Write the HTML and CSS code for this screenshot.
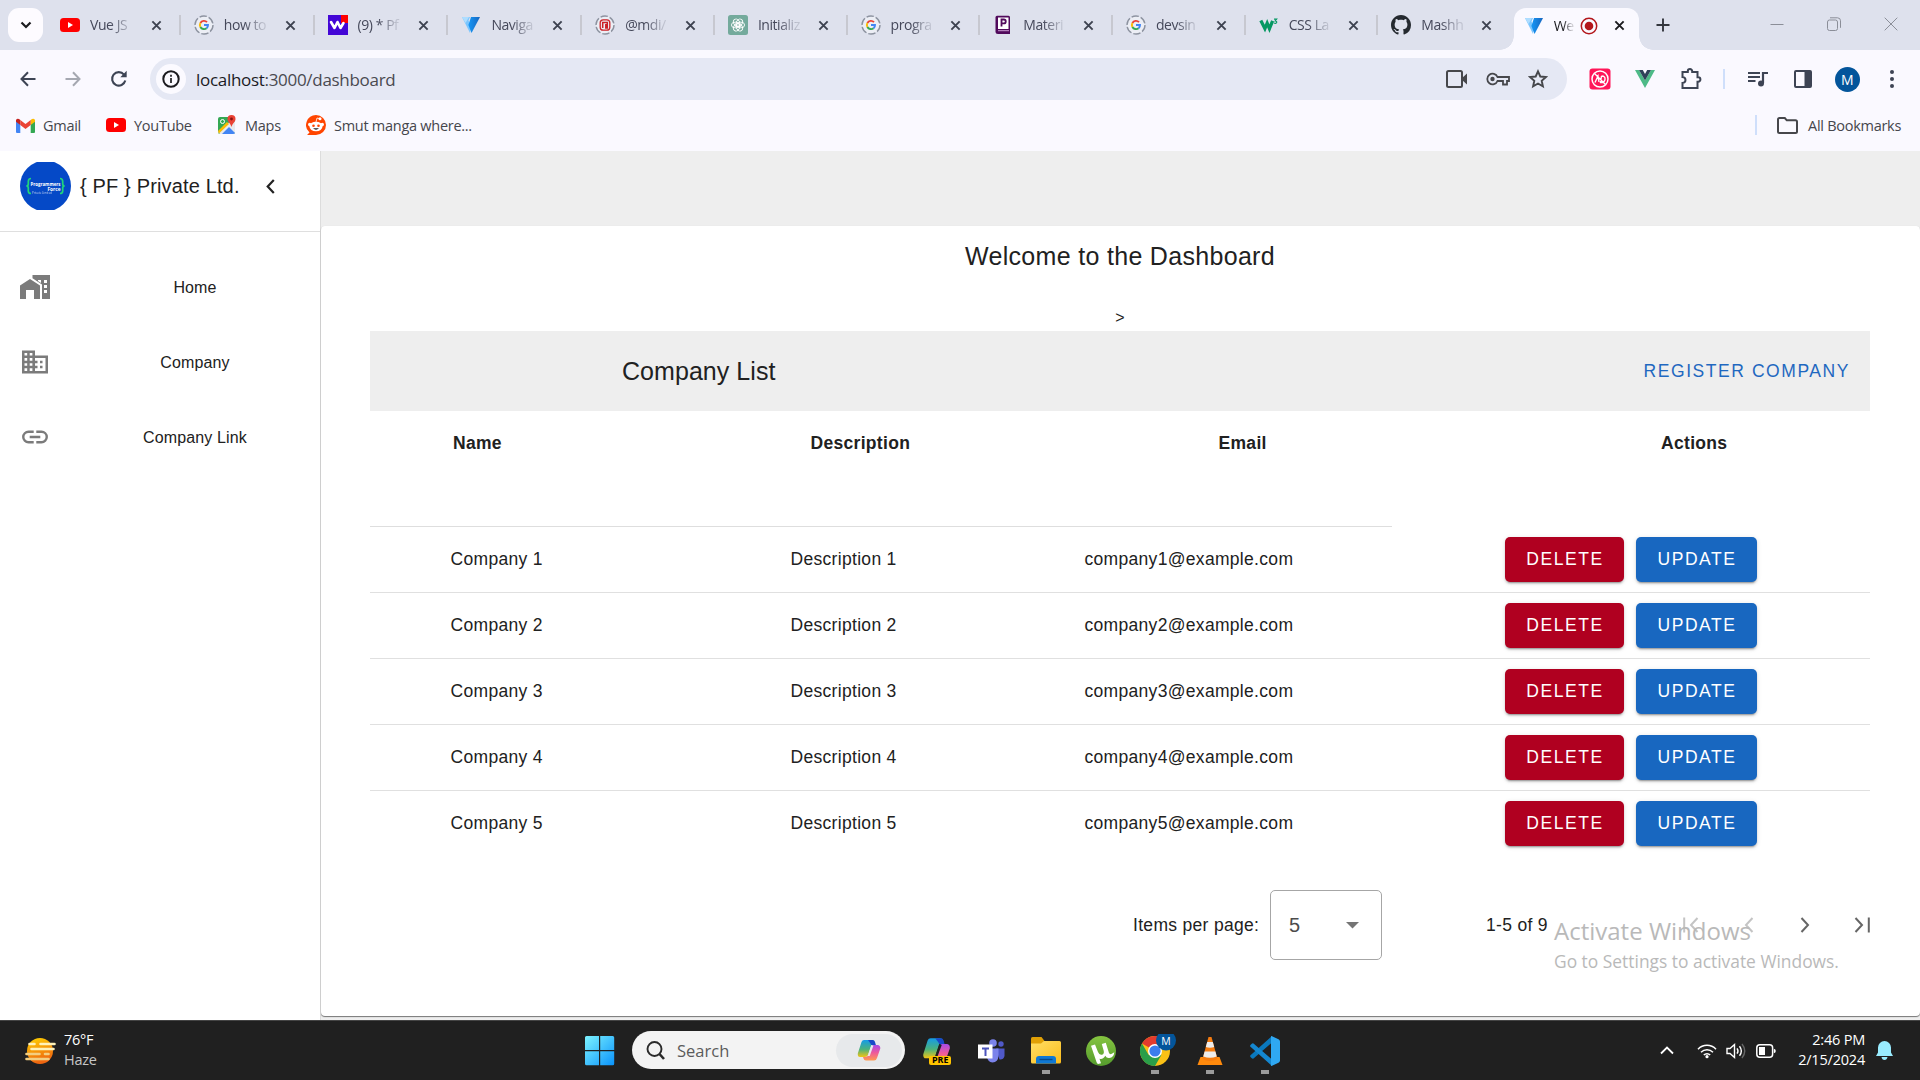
FILE: index.html
```html
<!DOCTYPE html>
<html lang="en">
<head>
<meta charset="utf-8">
<title>Welcome to the Dashboard</title>
<link rel="stylesheet" href="styles.css">
</head>
<body>
<svg class="defs" width="0" height="0">
  <defs>
    <linearGradient id="gv" x1="0" y1="0" x2="1" y2="0"><stop offset="0" stop-color="#1697f6"/><stop offset="1" stop-color="#1867c0"/></linearGradient>
    <linearGradient id="gwin" x1="0" y1="0" x2="1" y2="1"><stop offset="0" stop-color="#7df3ff"/><stop offset="1" stop-color="#0a93fb"/></linearGradient>
    <linearGradient id="gsun" x1="0" y1="0" x2="0.3" y2="1"><stop offset="0" stop-color="#ffd400"/><stop offset="1" stop-color="#ee6510"/></linearGradient>
    <linearGradient id="gcl" x1="0" y1="0" x2="0" y2="1"><stop offset="0" stop-color="#149be8"/><stop offset=".55" stop-color="#4ab27c"/><stop offset="1" stop-color="#f3c514"/></linearGradient>
    <linearGradient id="gcr" x1="0" y1="0" x2="0" y2="1"><stop offset="0" stop-color="#a74be8"/><stop offset=".5" stop-color="#ee5a9a"/><stop offset="1" stop-color="#ff9a50"/></linearGradient>
    <linearGradient id="gfold" x1="0" y1="0" x2="1" y2="1"><stop offset="0" stop-color="#ffdf66"/><stop offset="1" stop-color="#fbbc1c"/></linearGradient>
    <linearGradient id="gut" x1="0" y1="0" x2="0" y2="1"><stop offset="0" stop-color="#85c440"/><stop offset="1" stop-color="#559c2d"/></linearGradient>
    <symbol id="x" viewBox="0 0 12 12"><path d="M1.5 1.5l9 9M10.500 1.500l-9 9" fill="none" stroke="currentColor" stroke-width="2.100"/></symbol>
    <symbol id="yt" viewBox="0 0 20 20"><rect y="3" width="20" height="14" rx="3.500" fill="#f00"/><path d="M8 7v6l5-3z" fill="#fff"/></symbol>
    <symbol id="g" viewBox="0 0 20 20"><circle cx="10" cy="10" r="9" fill="#eceef5" stroke="#8d93a0" stroke-width="1.400" stroke-dasharray="7.400 2"/><g fill="none" stroke-width="1.900"><path d="M13 7.200A4.100 4.100 0 0 0 6.400 8" stroke="#ea4335"/><path d="M6.400 8a4.100 4.100 0 0 0 0 4" stroke="#fbbc05"/><path d="M6.400 12a4.100 4.100 0 0 0 6.200 1.200" stroke="#34a853"/><path d="M12.600 13.200A4 4 0 0 0 14 10h-4" stroke="#4285f4"/></g></symbol>
    <symbol id="w" viewBox="0 0 20 20"><path fill="#4306d6" d="M0 0h20v20H0z"/><path fill="#f00" d="M13 0h7v8h-7z"/><path d="M3 7l3.500 6L9.500 7l3 6L15.500 8" fill="none" stroke="#fff" stroke-width="2.600" stroke-linecap="round" stroke-linejoin="round"/></symbol>
    <symbol id="vt" viewBox="0 0 20 18"><path d="M1 1h8l-1.500 3.500 2.500 6L9 17z" fill="#7bc6ff"/><path d="M1 1h7L4.500 7z" fill="#aeddff"/><path d="M10 1h9L10.500 17 7.400 9z" fill="url(#gv)"/></symbol>
    <symbol id="mdi" viewBox="0 0 20 20"><circle cx="10" cy="10" r="9" fill="#eceef5" stroke="#8d93a0" stroke-width="1.400" stroke-dasharray="7.400 2"/><rect x="5.200" y="4.800" width="9.600" height="10.400" rx="3" fill="none" stroke="#cb2027" stroke-width="1.300"/><path d="M7.700 13V7.500h4.600V13h-1.500V9" fill="none" stroke="#cb2027" stroke-width="1.500"/></symbol>
    <symbol id="ai" viewBox="0 0 20 20"><rect width="20" height="20" rx="2.500" fill="#74aa9c"/><g fill="none" stroke="#fff" stroke-width=".9"><ellipse cx="10" cy="7.400" rx="2.900" ry="4" transform="rotate(30 10 10)"/><ellipse cx="10" cy="7.400" rx="2.900" ry="4" transform="rotate(90 10 10)"/><ellipse cx="10" cy="7.400" rx="2.900" ry="4" transform="rotate(150 10 10)"/><ellipse cx="10" cy="7.400" rx="2.900" ry="4" transform="rotate(210 10 10)"/><ellipse cx="10" cy="7.400" rx="2.900" ry="4" transform="rotate(270 10 10)"/><ellipse cx="10" cy="7.400" rx="2.900" ry="4" transform="rotate(330 10 10)"/></g></symbol>
    <symbol id="p" viewBox="0 0 20 20"><path d="M4 .8h11.500q1.500 0 1.500 1.500V19H5q-2.500 0-2.500-2.500v-14Q2.500.8 4 .8z" fill="#510a5c"/><path d="M5 2.500h10.500V14H5z" fill="#fff"/><path d="M5 15.700h11" stroke="#c99bd0"/><path d="M8.500 11.500v-7h2.300a1.900 1.900 0 0 1 0 3.900H8.500" fill="none" stroke="#510a5c" stroke-width="1.800"/></symbol>
    <symbol id="w3" viewBox="0 0 22 20"><path d="M2 5l4.500 9L9 8l2.500 6L15 5.500" fill="none" stroke="#059862" stroke-width="3.600"/><path d="M16.500 3.500h3l-1.700 2q2 0 1.700 1.600t-3 .8" fill="none" stroke="#059862" stroke-width="1.200"/></symbol>
    <symbol id="gh" viewBox="0 0 16 16"><path fill="#24292f" d="M8 0C3.580 0 0 3.580 0 8c0 3.540 2.290 6.530 5.470 7.590.4.070.55-.17.55-.38 0-.19-.01-.82-.01-1.490-2.010.37-2.530-.49-2.690-.94-.09-.23-.48-.94-.82-1.130-.28-.15-.68-.52-.01-.53.63-.01 1.080.58 1.230.82.72 1.210 1.870.87 2.330.66.070-.52.280-.87.510-1.070-1.780-.2-3.640-.89-3.640-3.950 0-.87.310-1.590.82-2.150-.08-.2-.36-1.020.08-2.120 0 0 .67-.21 2.200.82.640-.18 1.320-.27 2-.27s1.360.09 2 .27c1.530-1.040 2.200-.82 2.200-.82.440 1.100.160 1.920.080 2.120.510.560.820 1.270.820 2.150 0 3.070-1.870 3.750-3.650 3.950.290.250.540.730.540 1.480 0 1.070-.010 1.930-.010 2.200 0 .210.150.460.550.380A8.010 8.010 0 0 0 16 8c0-4.420-3.580-8-8-8z"/></symbol>
    <symbol id="cop" viewBox="0 0 24 22"><path d="M7 1h8q2 0 2.500 2l.8 3h-4L11 16q-.7 2-3 2H3Q.5 18 .8 14.500L4.500 3Q5.200 1 7 1z" fill="url(#gcl)"/><path d="M11 1h4.500q2 0 2.500 2l1 3.500h-3q-2 0-2.500-2z" fill="#1849c8"/><path d="M16 6h5q2.500.5 2.300 3.500L20 19q-.7 2.500-3 2.500H9q-2 0-2.500-2L6 18h2.500q2 0 2.700-2z" fill="url(#gcr)"/><path d="M14.300 6.500h2.200l-3.800 10.500h-2z" fill="var(--cut,#e8eaed)"/></symbol>
  </defs>
</svg>

<header class="browser">
  <div class="tabstrip">
    <div class="tabsearch"><svg width="12" height="8" viewBox="0 0 12 8"><path d="M1.500 1.500L6 6l4.500-4.500" fill="none" stroke="#1b1b1f" stroke-width="2.200"/></svg></div>
    <div class="tab wide"><svg class="fav"><use href="#yt"/></svg><span>Vue JS</span><svg class="x"><use href="#x"/></svg></div>
    <div class="tab wide"><svg class="fav"><use href="#g"/></svg><span>how to</span><svg class="x"><use href="#x"/></svg></div>
    <div class="tab wide"><svg class="fav"><use href="#w"/></svg><span>(9) * Pf</span><svg class="x"><use href="#x"/></svg></div>
    <div class="tab wide"><svg class="fav"><use href="#vt"/></svg><span>Naviga</span><svg class="x"><use href="#x"/></svg></div>
    <div class="tab"><svg class="fav"><use href="#mdi"/></svg><span>@mdi/</span><svg class="x"><use href="#x"/></svg></div>
    <div class="tab"><svg class="fav"><use href="#ai"/></svg><span>Initializ</span><svg class="x"><use href="#x"/></svg></div>
    <div class="tab"><svg class="fav"><use href="#g"/></svg><span>progra</span><svg class="x"><use href="#x"/></svg></div>
    <div class="tab"><svg class="fav"><use href="#p"/></svg><span>Materi</span><svg class="x"><use href="#x"/></svg></div>
    <div class="tab"><svg class="fav"><use href="#g"/></svg><span>devsin</span><svg class="x"><use href="#x"/></svg></div>
    <div class="tab"><svg class="fav"><use href="#w3"/></svg><span>CSS La</span><svg class="x"><use href="#x"/></svg></div>
    <div class="tab last"><svg class="fav"><use href="#gh"/></svg><span>Mashh</span><svg class="x"><use href="#x"/></svg></div>
    <div class="tab active"><svg class="fav"><use href="#vt"/></svg><span>We</span><svg class="rec" viewBox="0 0 18 18"><circle cx="9" cy="9" r="7.700" fill="none" stroke="#b3161b" stroke-width="1.500"/><circle cx="9" cy="9" r="4.300" fill="#b3161b"/></svg><svg class="x"><use href="#x"/></svg></div>
    <svg class="newtab" width="14" height="14" viewBox="0 0 14 14"><path d="M7 .5v13M.5 7h13" stroke="#33363d" stroke-width="1.900"/></svg>
    <div class="winctl">
      <svg width="14" height="14" viewBox="0 0 14 14"><path d="M.5 7.500h13" stroke="#8b8e98"/></svg>
      <svg width="14" height="14" viewBox="0 0 14 14" fill="none" stroke="#8b8e98"><rect x=".5" y="3" width="10" height="10.500" rx="2"/><path d="M3 .8h7.500q3 0 3 3v7"/></svg>
      <svg width="14" height="14" viewBox="0 0 14 14"><path d="M.7.7l12.600 12.600M13.300.7L.7 13.300" stroke="#8b8e98"/></svg>
    </div>
  </div>

  <div class="toolbar">
    <div class="nav">
      <svg width="16" height="16" viewBox="0 0 16 16" fill="none" stroke="#3d4454" stroke-width="2"><path d="M15.500 8H1.500M8 1.300L1.500 8 8 14.700"/></svg>
      <svg width="16" height="16" viewBox="0 0 16 16" fill="none" stroke="#a5a8b1" stroke-width="2"><path d="M.5 8h14M8 1.300L14.500 8 8 14.700"/></svg>
      <svg width="18" height="18" viewBox="0 0 18 18"><path d="M15.300 10.500A6.700 6.700 0 1 1 14 4.600" fill="none" stroke="#3d4454" stroke-width="2.100"/><path d="M16.700.8v6.400h-6.400z" fill="#3d4454"/></svg>
    </div>
    <div class="omnibox">
      <div class="info"><svg width="18" height="18" viewBox="0 0 18 18"><circle cx="9" cy="9" r="7.700" fill="none" stroke="#1b1b1f" stroke-width="2"/><path d="M9 8v5M9 4.800v1.900" stroke="#1b1b1f" stroke-width="1.700"/></svg></div>
      <div class="url"><b>localhost</b>:3000/dashboard</div>
      <svg width="22" height="18" viewBox="0 0 22 18"><rect x="1" y="1" width="15" height="16" rx="1.500" fill="none" stroke="#46474b" stroke-width="2"/><path d="M16 8l5-4.500v11L16 10z" fill="#46474b"/></svg>
      <svg width="24" height="16" viewBox="0 0 24 16" fill="none" stroke="#46474b"><path d="M11.500 6H23v4h-2v3.500h-4V10h-5.500a5.300 5.300 0 1 1 0-4z" stroke-width="1.800"/><circle cx="6.500" cy="8" r="2.200" fill="#46474b" stroke="none"/></svg>
      <svg width="20" height="20" viewBox="0 0 20 20"><path d="M10 2.300l2.300 5.200 5.600.5-4.200 3.800 1.200 5.600-4.900-2.900-4.900 2.900 1.200-5.600L2.100 8l5.600-.5z" fill="none" stroke="#46474b" stroke-width="1.900"/></svg>
    </div>
    <div class="ext">
      <span><svg width="22" height="22" viewBox="0 0 22 22"><rect x=".5" y=".5" width="21" height="21" rx="3" fill="#ff1659"/><g fill="none" stroke="#fff"><circle cx="11" cy="11" r="8" stroke-width="1.500"/><path d="M5.500 5.500l11 11M6 14.500L9 8l1 6M12.500 8l-1 6.500q4 .5 4.500-3t-3.500-3.500" stroke-width="1.400"/></g></svg></span>
      <span><svg width="20" height="18" viewBox="0 0 20 18"><path d="M0 0h4l6 10.400L16 0h4L10 18z" fill="#4dba87"/><path d="M4 0h3.800L10 4l2.200-4H16l-6 10.400z" fill="#2f4259"/></svg></span>
      <span><svg width="22" height="22" viewBox="0 0 22 22"><path d="M2.500 4h5.300V3.300a2.200 2.200 0 0 1 4.400 0V4h5.300v5.300h.7a2.200 2.200 0 0 1 0 4.400h-.7V20h-15v-5q3-.3 3-3t-3-3z" fill="none" stroke="#3d4454" stroke-width="2"/></svg></span>
    </div>
    <i class="bar"></i>
    <div class="ext right">
      <span><svg width="20" height="16" viewBox="0 0 20 16"><path d="M0 2h12M0 6h12M0 10h7.500" stroke="#3d4454" stroke-width="2"/><path d="M15 12V2h5" fill="none" stroke="#3d4454" stroke-width="2.200"/><circle cx="13" cy="12.500" r="3" fill="#3d4454"/></svg></span>
      <span><svg width="18" height="18" viewBox="0 0 18 18"><rect x="1" y="1" width="16" height="16" rx="1" fill="none" stroke="#3d4454" stroke-width="2"/><path d="M10.500 1H17v16h-6.500z" fill="#3d4454"/></svg></span>
      <span><em class="avatar">M</em></span>
      <span><svg width="6" height="18" viewBox="0 0 6 18" fill="#3d4454"><circle cx="3" cy="2" r="2"/><circle cx="3" cy="9" r="2"/><circle cx="3" cy="16" r="2"/></svg></span>
    </div>
  </div>

  <div class="bookmarks">
    <a class="gm"><svg width="19" height="15" viewBox="0 0 19 15"><path d="M0 2.500V14q0 1 1 1h3.300V6z" fill="#4285f4"/><path d="M19 2.500V14q0 1-1 1h-3.300V6z" fill="#34a853"/><path d="M14.700 2v5L19 3.800V2q-1.500-2.700-4.300 0z" fill="#fbbc04"/><path d="M4.300 2v5L0 3.800V2q1.500-2.700 4.300 0z" fill="#c5221f"/><path d="M4.300 2l5.200 4 5.200-4v5L9.500 11 4.300 7z" fill="#ea4335"/></svg>Gmail</a>
    <a class="ytb"><svg width="20" height="20"><use href="#yt"/></svg>YouTube</a>
    <a class="mp"><svg width="20" height="20" viewBox="0 0 20 20"><rect x="1" y="2" width="17" height="17" rx="2" fill="#34a853"/><path d="M1 17L16 4l2 3v10q0 2-2 2H3z" fill="#e8eaed"/><path d="M5 19l7-7 6 6q-.500 1-2 1z" fill="#4285f4"/><path d="M1 16l9-9 2 2-10 9.500z" fill="#fbbc04"/><circle cx="5.500" cy="6.500" r="2" fill="none" stroke="#fff"/><path d="M14.500 0a4 4 0 0 1 4 4c0 3-3 4-4 8-1-4-4-5-4-8a4 4 0 0 1 4-4z" fill="#ea4335"/><circle cx="14.500" cy="4" r="1.400" fill="#811"/></svg>Maps</a>
    <a class="rd"><svg width="20" height="20" viewBox="0 0 20 20"><path d="M10 0a10 10 0 1 1 0 20H1l2.500-2.500A10 10 0 0 1 10 0z" fill="#ff4500"/><ellipse cx="10" cy="11.500" rx="6.500" ry="4.800" fill="#fff"/><circle cx="3.700" cy="9.500" r="1.700" fill="#fff"/><circle cx="16.300" cy="9.500" r="1.700" fill="#fff"/><circle cx="14" cy="3.800" r="1.500" fill="#fff"/><path d="M10 7l1-4 3 .8" fill="none" stroke="#fff" stroke-width=".8"/><circle cx="7.500" cy="10.700" r="1.300" fill="#ff4500"/><circle cx="12.500" cy="10.700" r="1.300" fill="#ff4500"/><path d="M7 13.300h6q-3 2.700-6 0z" fill="#222"/></svg>Smut manga where...</a>
    <i class="bar"></i>
    <a class="all"><svg width="21" height="17" viewBox="0 0 21 17"><path d="M2.500 1h5.300l2 2.300h8.700q1.500 0 1.500 1.500v9.700q0 1.500-1.500 1.500h-16Q1 16 1 14.500v-12Q1 1 2.500 1z" fill="none" stroke="#46474b" stroke-width="2"/></svg>All Bookmarks</a>
  </div>
</header>

<div class="app">
  <aside class="sidebar">
    <div class="brand">
      <svg class="logo" width="51" height="48" viewBox="0 0 51 48"><circle cx="25.500" cy="24" r="25.500" fill="#0549c7"/><g fill="none" stroke="#20d67b" stroke-width="1.700"><path d="M11 16.500q-2.700 0-2.700 3v2.500q0 2-2 2 2 0 2 2V29q0 2.500 2.700 2.500M40 16.500q2.700 0 2.700 3v2.500q0 2 2 2-2 0-2 2V29q0 2.500-2.700 2.500"/></g><text x="10.500" y="23.500" textLength="30" lengthAdjust="spacingAndGlyphs" class="l1">Programmers</text><text x="27.500" y="29" textLength="13" lengthAdjust="spacingAndGlyphs" class="l1">Force</text><text x="12" y="32" textLength="20" lengthAdjust="spacingAndGlyphs" class="l2">Private Limited</text></svg>
      <span>{ PF } Private Ltd.</span>
      <svg class="collapse" width="9" height="15" viewBox="0 0 9 15"><path d="M7.800 1L1.700 7.500 7.800 14" fill="none" stroke="#222" stroke-width="2.200"/></svg>
    </div>
    <nav>
      <a><i><svg width="30" height="24" viewBox="0 0 30 24" fill="#7b7b7b"><path d="M0 10.500L10 4l10 6.500V24h-6v-9H6v9H0z"/><path fill-rule="evenodd" d="M12.500 0H30v24h-8V9.500L12.500 3.300zM18 5v1l3 2V5zm6 0v3h3V5zm0 5v3h3v-3zm0 5v3h3v-3z"/></svg></i><span>Home</span></a>
      <a><i><svg width="26" height="24" viewBox="0 0 26 23"><path fill="#7b7b7b" fill-rule="evenodd" d="M0 0h13v5h13v18H0zM2.500 2.500v2.600h2.700V2.500zm5.200 0v2.600h2.700V2.500zM2.500 7.600v2.600h2.700V7.600zm5.200 0v2.600h2.700V7.600zM2.500 12.700v2.600h2.700v-2.600zm5.200 0v2.600h2.700v-2.600zM2.500 17.800v2.700h2.700v-2.700zm5.200 0v2.700h2.700v-2.700zM13 7.500v2.700h2.500v2.500H13v2.600h2.500v2.500H13v2.700h10.500v-13zM18 10.200h2.500v2.500H18zm0 5.100h2.500v2.500H18z"/></svg></i><span>Company</span></a>
      <a><i><svg width="26" height="14" viewBox="0 0 26 14" fill="none" stroke="#7b7b7b" stroke-width="2.400"><path d="M11.700 1.700H6.500a5.200 5.200 0 0 0 0 10.500h5.200M14.300 1.700h5.200a5.200 5.200 0 0 1 0 10.500h-5.200M7.700 7h10.600"/></svg></i><span>Company Link</span></a>
    </nav>
  </aside>

  <main>
    <div class="appbar"></div>
    <div class="card">
      <h1>Welcome to the Dashboard</h1>
      <div class="stray">&gt;</div>
      <div class="listbar"><h2>Company List</h2><a>REGISTER COMPANY</a></div>
      <div class="thead"><span>Name</span><span>Description</span><span>Email</span><span>Actions</span></div>
      <div class="row"><span>Company 1</span><span>Description 1</span><span>company1@example.com</span><div><button class="del">DELETE</button><button class="upd">UPDATE</button></div></div>
      <div class="row"><span>Company 2</span><span>Description 2</span><span>company2@example.com</span><div><button class="del">DELETE</button><button class="upd">UPDATE</button></div></div>
      <div class="row"><span>Company 3</span><span>Description 3</span><span>company3@example.com</span><div><button class="del">DELETE</button><button class="upd">UPDATE</button></div></div>
      <div class="row"><span>Company 4</span><span>Description 4</span><span>company4@example.com</span><div><button class="del">DELETE</button><button class="upd">UPDATE</button></div></div>
      <div class="row end"><span>Company 5</span><span>Description 5</span><span>company5@example.com</span><div><button class="del">DELETE</button><button class="upd">UPDATE</button></div></div>
      <div class="pager">
        <span class="ipp">Items per page:</span>
        <div class="select"><span>5</span><svg width="13" height="7" viewBox="0 0 13 7"><path d="M0 0h13L6.500 6.500z" fill="#757575"/></svg></div>
        <span class="range">1-5 of 9</span>
        <div class="pages">
          <svg class="off" width="16" height="16" viewBox="0 0 16 16"><path d="M1.200.5v15M14.500 1L8 8l6.500 7"/></svg>
          <svg class="off" width="10" height="16" viewBox="0 0 10 16"><path d="M8.500 1L2 8l6.500 7"/></svg>
          <svg class="next" width="10" height="16" viewBox="0 0 10 16"><path d="M1.500 1L8 8l-6.500 7"/></svg>
          <svg width="16" height="16" viewBox="0 0 16 16"><path d="M14.800.5v15M1.500 1L8 8l-6.500 7"/></svg>
        </div>
      </div>
    </div>
  </main>
  <div class="watermark"><p class="big">Activate Windows</p><p>Go to Settings to activate Windows.</p></div>
</div>

<footer class="taskbar">
  <div class="weather">
    <svg width="31" height="26" viewBox="0 0 31 26"><circle cx="15" cy="13" r="13" fill="url(#gsun)"/><g stroke-width="2.600" stroke-linecap="round"><path d="M4.500 6h5M15.500 6h14M6.500 11h22" stroke="#fff2b8"/><path d="M1.500 16h13M20 16h3.500M1.500 21h22" stroke="#f3ce80"/></g></svg>
    <div><p>76°F</p><p class="dim">Haze</p></div>
  </div>
  <svg class="start" width="30" height="30" viewBox="0 0 30 30"><path fill="url(#gwin)" d="M1.500 0H14v14H0V1.500Q0 0 1.500 0zM15.200 0h12.500q1.500 0 1.500 1.500V14h-14zM0 15.200h14v14H1.500Q0 29.200 0 27.700zM15.200 15.200h14v12.500q0 1.500-1.500 1.500H15.200z"/></svg>
  <div class="search">
    <svg width="19" height="19" viewBox="0 0 19 19" fill="none" stroke="#2a2a2a"><circle cx="8.500" cy="8" r="7" stroke-width="1.900"/><path d="M13.500 13l4.500 5" stroke-width="2.600"/></svg>
    <span>Search</span>
    <div><svg width="24" height="22"><use href="#cop"/></svg></div>
  </div>
  <div class="apps">
    <div class="pre"><svg width="29" height="28" viewBox="0 0 29 28"><use href="#cop" width="29" height="26"/><rect x="7" y="19" width="22" height="9" rx="2" fill="#ffc400"/><text x="10" y="26.300" textLength="16.500" lengthAdjust="spacingAndGlyphs">PRE</text></svg></div>
    <div><svg width="27" height="24" viewBox="0 0 27 24"><circle cx="15" cy="4" r="3.800" fill="#7b83eb"/><circle cx="23" cy="5" r="2.700" fill="#5059c9"/><path d="M18 9.500h8.500V17q-1 4-5 3.500z" fill="#5059c9"/><path d="M9 9.500h11.500V17q-.5 6-6 6.500-5-.5-5.500-6z" fill="#7b83eb"/><rect y="5.500" width="14.500" height="14" fill="#fff"/><path d="M4 9.500h7M7.500 9.500v7.500" stroke="#4b53bc" stroke-width="2"/></svg></div>
    <div class="open"><svg width="30" height="27" viewBox="0 0 30 27"><path d="M0 1.500Q0 0 1.500 0h9l3 4v5H0z" fill="#e0a006"/><path d="M0 6.500h10L13 4h15.500Q30 4 30 5.500V25q0 1.500-1.500 1.500h-27Q0 26.500 0 25z" fill="url(#gfold)"/><path d="M5 26.500V22q0-3 3-3h14q3 0 3 3v4.500z" fill="#0f78d4"/><path d="M8.500 22.500h13" stroke="#074a8c" stroke-width="1.400"/></svg></div>
    <div><svg width="30" height="30" viewBox="0 0 30 30"><circle cx="15" cy="15" r="15" fill="url(#gut)"/><path d="M5 9.800l4-1.200L12 16q1.500 3.500 4 2.700t1.700-4L15.800 8l4-1.200L23 17q.8 1.800 2.800.8l2.500-1.500q-.5 5.200-5 5.700-2.800.3-4-2.200-1.800 3.700-5.800 3l1.500 4.400-3 .8q-1-.3-1.500-2z" fill="#fff"/></svg></div>
    <div class="open chrome"><svg width="36" height="32" viewBox="0 0 36 32"><circle cx="15" cy="17" r="15" fill="#fbc116"/><path d="M15 17L2 9.500A15 15 0 0 1 28 9.500z" fill="#e33b2e"/><path d="M15 2a15 15 0 0 1 13 7.500H15z" fill="#e33b2e"/><path d="M2 9.500A15 15 0 0 0 15 32l6.500-11.300L8.500 20.700z" fill="#2a9e49"/><circle cx="15" cy="17" r="7" fill="#fff"/><circle cx="15" cy="17" r="5.600" fill="#3b7ded"/><circle cx="26" cy="6.500" r="10" fill="#03559b"/><text class="bm" x="26" y="10.500" text-anchor="middle">M</text></svg></div>
    <div class="open"><svg width="26" height="28" viewBox="0 0 26 28"><path d="M3.500 20h19l3 8H.5z" fill="#ff8a0c"/><path d="M11.500 0h3l6 22q-7.500 4-15 0z" fill="#f57c10"/><path d="M10.200 5h5.600l1.400 5q-4.200 1.500-8.400 0zM7.600 14.500h10.800l1.300 5q-6.700 2.500-13.400 0z" fill="#ececec"/></svg></div>
    <div class="open"><svg width="30" height="30" viewBox="0 0 30 30"><path d="M22 6.500L3.500 22.500Q2.500 23 1.800 22.200L.5 20.900q-.8-.8 0-1.600L22 0z" fill="#0a78bd"/><path d="M22 23.500L3.500 7.500q-1-.5-1.700.3L.5 9.100q-.8.8 0 1.600L22 30z" fill="#1487d0"/><path d="M21.500 0L28.500 3.300Q30 4 30 5.500v19q0 1.500-1.500 2.200L21.500 30q-.9-.3-.5-1V1q0-1 .5-1z" fill="#2fa8f2"/></svg></div>
  </div>
  <div class="tray">
    <svg width="14" height="9" viewBox="0 0 14 9"><path d="M1 7.500l6-6 6 6" fill="none" stroke="#fff" stroke-width="1.800"/></svg>
    <svg class="wifi" width="20" height="16" viewBox="0 0 20 16" fill="none" stroke="#fff" stroke-width="1.500"><path d="M1 6.200a12.500 12.500 0 0 1 18 0M4 9.200a8.500 8.500 0 0 1 12 0M6.800 12a4.500 4.500 0 0 1 6.400 0"/><circle cx="10" cy="13.700" r="1.600" fill="#fff" stroke="none"/></svg>
    <svg class="vol" width="20" height="18" viewBox="0 0 20 18" fill="none" stroke="#fff" stroke-width="1.400"><path d="M1 6.500h3L8.500 2.500v13L4 11.500H1z"/><path d="M11 6.300q2 2.700 0 5.400M13.500 4.200q3.700 4.800 0 9.600"/><path d="M16 2q5.500 7 0 14" stroke="#666"/></svg>
    <svg class="bat" width="20" height="14" viewBox="0 0 20 14"><rect x=".8" y=".8" width="15.800" height="12.400" rx="3" fill="none" stroke="#fff" stroke-width="1.500"/><rect x="3" y="3" width="6" height="8" fill="#fff"/><path d="M17.800 4.800q2 .5 2 2.200t-2 2.200z" fill="#fff"/></svg>
    <div class="clock"><p>2:46 PM</p><p>2/15/2024</p></div>
    <svg class="bell" width="17" height="19" viewBox="0 0 17 19" fill="#99ecff"><path d="M8.500 0a6.500 6.500 0 0 1 6.500 6.500v5l2 3.500H0l2-3.500v-5A6.500 6.500 0 0 1 8.500 0zM5.500 16h6q-.5 3-3 3t-3-3z"/></svg>
  </div>
</footer>
</body>
</html>
```
FILE: styles.css
```css
* { box-sizing: border-box; }
body { margin: 0; width: 1920px; height: 1080px; overflow: hidden; font-family: "Liberation Sans", sans-serif; color: #212121; display: flex; flex-direction: column; }
p, h1, h2 { margin: 0; font-weight: 400; }
svg { display: block; flex: none; }
.defs { position: absolute; }

.browser { height: 151px; flex: none; background: #faf9ff; font-family: "Open Sans", sans-serif; }
.tabstrip { height: 50px; background: #dee1ed; display: flex; padding-left: 8px; }
.tabsearch { width: 35px; height: 34px; margin: 8px 5px 0 0; border-radius: 11px; background: #fdfbff; display: flex; align-items: center; justify-content: center; flex: none; }
.tab { width: 132.7px; height: 50px; flex: none; padding: 0 20px 0 12px; display: flex; align-items: center; color: #45485a; background: linear-gradient(#c7c8d0, #c7c8d0) right 1px top 15px / 2px 20px no-repeat; }
.tab.wide { width: 133.8px; }
.tab.last { background: none; width: 134.500px; padding-right: 22px; }
.fav { width: 20px; height: 20px; margin-right: 10px; }
.tab span { flex: 1; min-width: 0; white-space: nowrap; font-size: 14px; letter-spacing: -.45px; mask-image: linear-gradient(90deg, #000 45%, rgba(0,0,0,.2) 88%); margin-right: 16px; line-height: 24px; }
.x { width: 11px; height: 11px; color: #3d4250; }
.tab.active { width: 125px; height: 42px; margin: 8px 0 0; padding: 0 14px 7px 10px; border-radius: 12px 12px 0 0; background: #faf9ff; color: #1b1b1f; position: relative; }
.tab.active::before, .tab.active::after { content: ""; position: absolute; bottom: 0; width: 14px; height: 14px; }
.tab.active::before { left: -14px; background: radial-gradient(circle at 0 0, transparent 13.500px, #faf9ff 14px); }
.tab.active::after { right: -14px; background: radial-gradient(circle at 100% 0, transparent 13.500px, #faf9ff 14px); }
.tab.active span { margin-right: 6px; }
.tab.active .x { color: #1b1b1f; }
.rec { width: 18px; height: 18px; margin-right: 16px; }
.newtab { margin: 18px 0 0 17px; }
.winctl { margin: 17px 22px 0 auto; display: flex; gap: 43px; }

.toolbar { height: 58px; display: flex; align-items: center; background: #faf9ff; }
.nav { display: flex; align-items: center; gap: 29px; width: 150px; padding-left: 20px; }
.omnibox { width: 1417px; height: 42px; border-radius: 21px; background: #e5e8f4; display: flex; align-items: center; padding: 0 19px 0 6px; gap: 18px; }
.info { width: 30px; height: 30px; border-radius: 50%; background: #fbfaff; display: flex; align-items: center; justify-content: center; }
.url { flex: 1; font-size: 17px; letter-spacing: -.3px; color: #4a4a50; margin-left: -8px; }
.url b { font-weight: 400; color: #1b1b1f; }
.ext { display: flex; margin-left: 10px; }
.ext span { width: 45.500px; display: flex; justify-content: center; align-items: center; }
.bar { width: 2px; height: 20px; background: #cfdffb; flex: none; }
.toolbar .bar { margin: 0 10.500px 0 9.500px; }
.ext.right { margin: 0; }
.ext.right span { width: 44.700px; }
.avatar { width: 25px; height: 25px; border-radius: 50%; background: #03559b; color: #fff; font: 14px/25px "Open Sans", sans-serif; text-align: center; }
.bookmarks { height: 36px; display: flex; align-items: center; font-size: 14.500px; letter-spacing: -.27px; color: #45464c; padding: 0 18px 2px 16px; }
.bookmarks a { display: flex; align-items: center; gap: 8px; white-space: nowrap; }
.gm { width: 90px; }
.ytb { width: 111px; }
.mp { width: 89px; }
.bookmarks .bar { margin-left: auto; margin-right: 20px; }
.bookmarks .all { width: 125px; gap: 10px; }

.app { height: 869px; flex: none; display: flex; position: relative; background: #fff; }
.sidebar { width: 321px; border-right: 1px solid #dcdcdc; flex: none; }
.brand { height: 81px; border-bottom: 1px solid #dfdfdf; display: flex; align-items: flex-start; padding: 11px 0 0 20px; font-size: 20px; letter-spacing: .15px; }
.brand span { margin: 13px 0 0 9px; line-height: 23px; width: 186px; white-space: nowrap; }
.collapse { margin-top: 17px; }
.logo text { fill: #fff; font-family: "Open Sans", sans-serif; letter-spacing: 0; }
.l1 { font-size: 5.500px; font-weight: 700; }
.l2 { font-size: 3px; opacity: .7; }
nav { padding-top: 17px; }
nav a { height: 75px; display: flex; align-items: center; padding-left: 20px; font-size: 16px; letter-spacing: .14px; }
nav i { width: 30px; display: flex; justify-content: center; flex: none; }
nav span { width: 290px; flex: none; text-align: center; padding-top: 2px; }

main { flex: 1; display: flex; flex-direction: column; background: #eee; }
.appbar { height: 75px; background: #eee; flex: none; }
.card { height: 790px; background: #fff; border-radius: 4px; box-shadow: 0 0 1px rgba(0,0,0,.08), 0 1px 1px rgba(0,0,0,.5); padding: 0 50px 0 49px; }
h1 { font-size: 25px; letter-spacing: .31px; line-height: 40px; text-align: center; padding-top: 10px; }
.stray { text-align: center; font-size: 16px; line-height: 20px; margin-top: 32px; height: 23px; }
.listbar { height: 80px; background: #eee; display: flex; align-items: center; justify-content: space-between; padding: 0 20px 0 252px; }
h2 { font-size: 25px; letter-spacing: .05px; line-height: 40px; }
.listbar a { color: #1f68c0; font-size: 17.500px; letter-spacing: 1.560px; }
.thead, .row { display: grid; font-size: 17.500px; letter-spacing: .31px; }
.thead { height: 116px; padding: 21px 0 0 83px; grid-template-columns: 357.500px 408px 442.500px 1fr; font-weight: 700; line-height: 22px; background: linear-gradient(#dedede, #dedede) 0 100% / 1022px 1px no-repeat; }
.row { height: 66px; padding-left: 80.500px; grid-template-columns: 340px 294px 420.500px 1fr; align-items: center; border-bottom: 1px solid #e0e0e0; }
.row > span { margin-top: -1px; }
.row.end { border-bottom-color: transparent; }
.row div { display: flex; gap: 12px; }
button { border: 0; height: 45px; width: 119px; border-radius: 5px; color: #fff; font: 17.500px "Liberation Sans", sans-serif; letter-spacing: 1.560px; padding: 0 0 0 1px; box-shadow: 0 3px 1px -2px rgba(0,0,0,.2), 0 2px 2px rgba(0,0,0,.14), 0 1px 5px rgba(0,0,0,.12); }
.del { background: #b00020; }
.upd { background: #1867c0; width: 121px; }
.pager { height: 70px; margin-top: 33px; display: flex; align-items: center; font-size: 17.500px; letter-spacing: .31px; }
.ipp { margin-left: 763px; width: 137px; white-space: nowrap; }
.select { width: 112px; height: 70px; border: 1px solid #a6a6a6; border-radius: 5px; display: flex; align-items: center; justify-content: space-between; padding: 0 22px 0 18px; font-size: 20px; color: #4c4c4c; }
.range { margin-left: 104px; width: 197px; white-space: nowrap; }
.pages { display: flex; gap: 45px; }
.pages path { fill: none; stroke: #666; stroke-width: 2; }
.pages .off path { stroke: #c4c4c4; }
.pages .next { margin: 0 -1px 0 1px; }
.watermark { position: absolute; left: 1554px; top: 762px; font-family: "Open Sans", sans-serif; font-size: 17.400px; color: #b9b9b9; white-space: nowrap; line-height: 24px; }
.watermark .big { font-size: 24px; line-height: 36px; }

.taskbar { height: 60px; flex: none; background: #202020; border-top: 1px solid #444; display: flex; align-items: center; font-family: "Open Sans", sans-serif; color: #fff; font-size: 14.500px; }
.weather { display: flex; width: 585px; padding-left: 25px; gap: 8px; align-items: center; line-height: 20px; letter-spacing: -.3px; }
.weather div, .clock { margin-top: -2px; }
.weather .dim { color: #c6c6c6; }
.start { margin-right: 17px; }
.search { width: 273px; height: 38px; border-radius: 19px; background: #f3f3f3; display: flex; align-items: center; padding: 0 3px 0 14px; color: #5b5b5b; font-size: 16.500px; margin-top: -1px; }
.search span { flex: 1; margin-left: 12px; }
.search div { width: 66px; height: 33px; border-radius: 17px; background: #e7e9eb; display: flex; align-items: center; justify-content: center; }
.apps { display: flex; margin-left: 4px; }
.apps div { width: 54.800px; height: 59px; display: flex; justify-content: center; align-items: center; background: none; }
.apps .open { background: radial-gradient(#9b9b9b, #9b9b9b) 50% 49px / 8px 4px no-repeat; }
.apps .chrome { padding: 0 0 2px 5px; background-position: 23px 49px; }
.apps .pre { --cut: #202020; }
.pre text { font: 700 8px "Open Sans", sans-serif; }
.bm { font: 10.500px "Open Sans", sans-serif; fill: #fff; }
.tray { margin-left: auto; display: flex; align-items: center; padding-right: 27px; }
.wifi { margin-left: 23px; }
.vol { margin-left: 9px; }
.bat { margin-left: 10px; }
.clock { width: 89px; text-align: right; line-height: 20px; letter-spacing: -.2px; }
.bell { margin-left: 11px; }
```
